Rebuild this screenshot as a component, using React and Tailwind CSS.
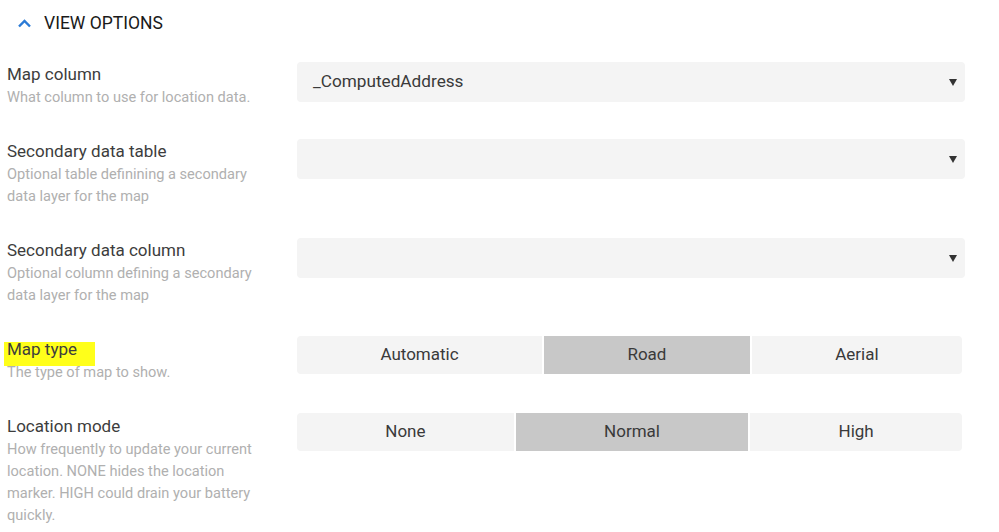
import React from 'react';

const font = { fontFamily: 'Roboto, "Noto Sans", sans-serif' };

const Caret = () => (
  <svg width="10" height="9" viewBox="0 0 10 9" className="shrink-0">
    <polygon points="1,1 9,1 5,8" fill="#333" />
  </svg>
);

const Select = ({ value }) => (
  <div className="flex h-[40px] items-center justify-between rounded-[4px] bg-[#f4f4f4] pl-[16px] pr-[7px] text-[17.2px] text-[#3a3a3a]">
    <span>{value}</span>
    <Caret />
  </div>
);

const Segmented = ({ options, selected }) => (
  <div className="-mt-[1px] mr-[3px] flex h-[38px] gap-[2px] overflow-hidden rounded-[4px]">
    {options.map((o) => (
      <div
        key={o}
        className={`flex flex-auto items-center justify-center text-[17px] text-[#3a3a3a] ${
          o === selected ? 'bg-[#c8c8c8]' : 'bg-[#f4f4f4]'
        }`}
      >
        {o}
      </div>
    ))}
  </div>
);

const Row = ({ label, desc, highlight, children }) => (
  <div className="flex items-start pr-[34px]">
    <div className="w-[297px] shrink-0 pl-[7px] pr-[36px]">
      <div className="text-[17px] leading-[24px] text-[#3d3d3d]">
        {highlight ? (
          <span className="relative inline-block">
            <span className="absolute -left-[3px] -right-[18px] top-[5px] -bottom-[5px] bg-[#ffff1a]" />
            <span className="relative">{label}</span>
          </span>
        ) : (
          label
        )}
      </div>
      <div className="text-[14.6px] leading-[22px] text-[#b0b0b0]">{desc}</div>
    </div>
    <div className="min-w-0 flex-1">{children}</div>
  </div>
);

export default function App() {
  return (
    <div className="min-h-[532px] bg-white pt-[11px]" style={font}>
      <div className="flex h-[24px] items-center gap-[12px] pl-[17px]">
        <svg width="15" height="10" viewBox="0 0 15 10">
          <polyline points="2,8.5 7.5,3 13,8.5" fill="none" stroke="#2b7bd6" strokeWidth="2.4" />
        </svg>
        <span className="text-[17.5px] text-[#1a1a1a]">VIEW OPTIONS</span>
      </div>

      <div className="mt-[27px] flex flex-col gap-[31px]">
        <Row label="Map column" desc="What column to use for location data.">
          <Select value="_ComputedAddress" />
        </Row>
        <Row label="Secondary data table" desc="Optional table definining a secondary data layer for the map">
          <Select value="" />
        </Row>
        <Row label="Secondary data column" desc="Optional column defining a secondary data layer for the map">
          <Select value="" />
        </Row>
        <Row label="Map type" desc="The type of map to show." highlight>
          <Segmented options={['Automatic', 'Road', 'Aerial']} selected="Road" />
        </Row>
        <Row
          label="Location mode"
          desc="How frequently to update your current location. NONE hides the location marker. HIGH could drain your battery quickly."
        >
          <Segmented options={['None', 'Normal', 'High']} selected="Normal" />
        </Row>
      </div>
    </div>
  );
}
